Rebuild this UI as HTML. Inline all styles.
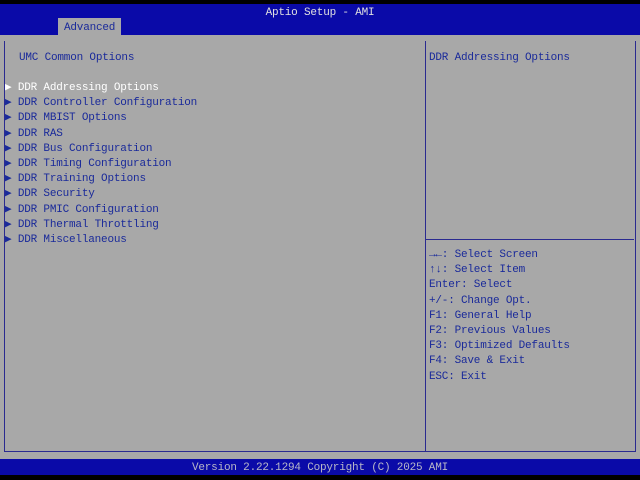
<!DOCTYPE html>
<html><head><style>
body{margin:0;width:640px;height:480px;background:#000;position:relative;overflow:hidden;font-family:"Liberation Mono",monospace;font-size:11px;letter-spacing:-0.2px}
.a{position:absolute;white-space:pre;line-height:15.2px}
</style></head><body>
<div style="position:absolute;left:0;top:4px;width:640px;height:31px;background:#0a0aa8"></div>
<div class="a" style="left:0;width:640px;top:6px;text-align:center;color:#e0e0e0">Aptio Setup - AMI</div>
<div style="position:absolute;left:58px;top:18px;width:63px;height:17px;background:#a8a8a8"></div>
<div class="a" style="left:64px;top:21px;color:#1a2a9a">Advanced</div>
<div style="position:absolute;left:0;top:35px;width:640px;height:424px;background:#a8a8a8"></div>
<div style="position:absolute;left:4px;top:41px;width:630px;height:410px;border:1px solid #2a2a90;border-top:none"></div>
<div style="position:absolute;left:425px;top:41px;width:1px;height:410px;background:#2a2a90"></div>
<div style="position:absolute;left:426px;top:239px;width:208px;height:1px;background:#2a2a90"></div>
<div class="a" style="left:19px;top:51px;color:#1a2a9a">UMC Common Options</div>
<div class="a" style="left:5px;top:81px;color:#1a2a9a"><span style="color:#fff">▶ DDR Addressing Options</span>
▶ DDR Controller Configuration
▶ DDR MBIST Options
▶ DDR RAS
▶ DDR Bus Configuration
▶ DDR Timing Configuration
▶ DDR Training Options
▶ DDR Security
▶ DDR PMIC Configuration
▶ DDR Thermal Throttling
▶ DDR Miscellaneous</div>
<div class="a" style="left:429px;top:51px;color:#1a2a9a">DDR Addressing Options</div>
<div class="a" style="left:429px;top:248px;color:#1a2a9a">→←: Select Screen
↑↓: Select Item
Enter: Select
+/-: Change Opt.
F1: General Help
F2: Previous Values
F3: Optimized Defaults
F4: Save &amp; Exit
ESC: Exit</div>
<div style="position:absolute;left:0;top:459px;width:640px;height:16px;background:#0a0aa8"></div>
<div class="a" style="left:0;width:640px;top:461px;text-align:center;color:#b8b8c8">Version 2.22.1294 Copyright (C) 2025 AMI</div>
</body></html>
